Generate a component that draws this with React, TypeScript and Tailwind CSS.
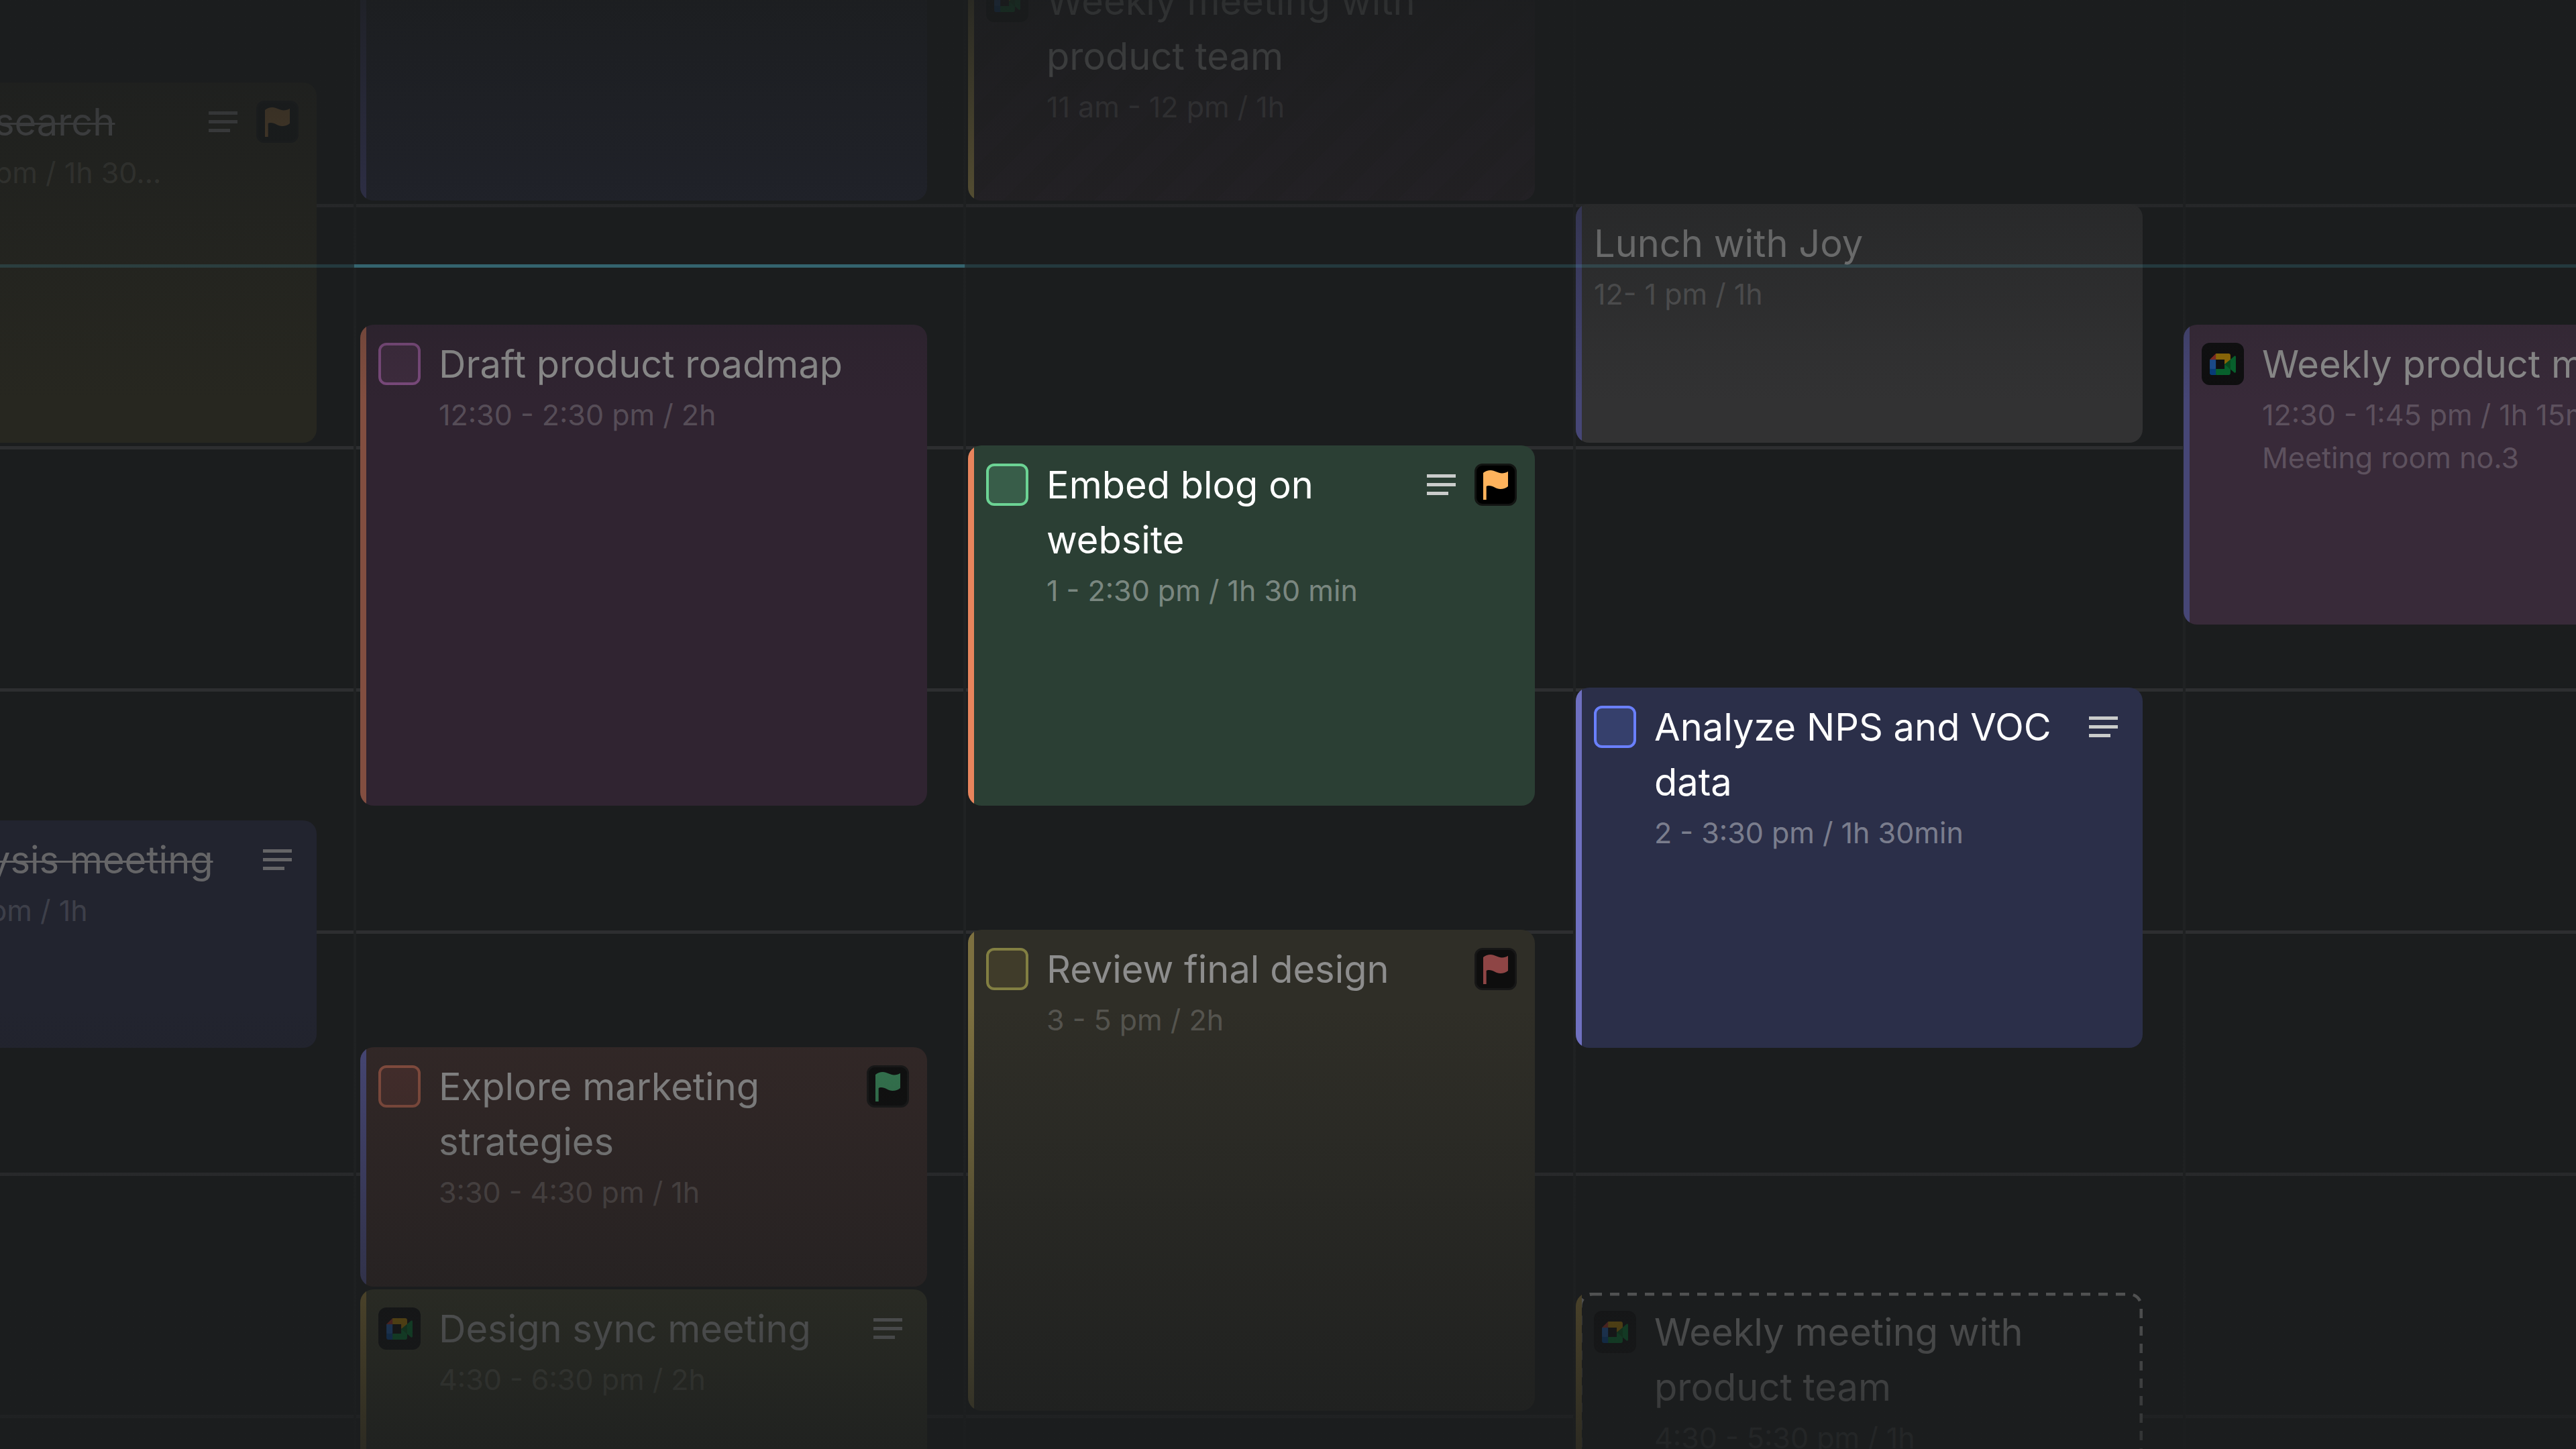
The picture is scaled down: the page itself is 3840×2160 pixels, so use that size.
import React from 'react';
import clsx from 'clsx';

const HOURS = ['11 am', '12 pm', '1 pm', '2 pm', '3 pm', '4 pm', '5 pm'];

function NotesIcon() {
  return (
    <span className="flex h-[63px] w-[63px] shrink-0 items-center justify-center">
      <svg viewBox="0 0 43 31" className="h-[31px] w-[43px]" fill="currentColor" aria-hidden="true">
        <rect width="43" height="5" />
        <rect y="13" width="43" height="5" />
        <rect y="26" width="32" height="5" />
      </svg>
    </span>
  );
}

function FlagIcon({ className, box }: { className: string; box?: string }) {
  return (
    <span className={clsx('h-[63px] w-[63px] shrink-0 rounded-xl border-[3px]', box ?? 'border-[#171717] bg-[#0e0e0e]', className)}>
      <svg viewBox="3 3 57 57" className="h-full w-full" fill="currentColor" aria-hidden="true">
        <path d="M13 14C16 11.500 20 10 24 10C30 10 35 14.500 41 14.500C44 14.500 47.500 13.500 50 11.700V34C47 36.500 43 38 38.700 38C32 38 28 33 21.700 33C20 33 18.700 33.300 17.700 34V54H13Z" />
      </svg>
    </span>
  );
}

function MeetIcon({ faded }: { faded?: boolean }) {
  return (
    <span className={clsx('flex h-[63px] w-[63px] shrink-0 items-center justify-center rounded-xl', faded ? 'bg-[#111213]' : 'bg-[#0e0e0f]')}>
      <svg viewBox="0 0 87.500 72" className="h-[32px] w-[39px] opacity-55" aria-hidden="true">
        <path fill="#00832d" d="M49.500 36l8.530 9.750 11.470 7.330 2-17.020-2-16.640-11.690 6.440z" />
        <path fill="#0066da" d="M0 51.500V66c0 3.315 2.685 6 6 6h14.500l3-10.960-3-9.540-9.950-3z" />
        <path fill="#e94235" d="M20.500 0L0 20.500l10.550 3 9.950-3 2.950-9.410z" />
        <path fill="#2684fc" d="M20.500 20.500H0v31h20.500z" />
        <path fill="#00ac47" d="M82.600 8.680L69.500 19.420v33.660l13.160 10.790c1.970 1.540 4.850.135 4.850-2.370V11c0-2.535-2.945-3.925-4.910-2.320zM49.500 36v15.500h-29V72h43c3.315 0 6-2.685 6-6V53.080z" />
        <path fill="#ffba00" d="M63.500 0h-43v20.500h29V36l20-16.570V6c0-3.315-2.685-6-6-6z" />
      </svg>
    </span>
  );
}

type CardProps = {
  title?: React.ReactNode;
  time?: string;
  place?: string;
  className: string;
  accent?: string;
  check?: string;
  meet?: boolean;
  fadedMeet?: boolean;
  done?: boolean;
  active?: boolean;
  icons?: React.ReactNode;
  iconColor?: string;
  children?: React.ReactNode;
};

function EventCard(props: CardProps) {
  const { title, time, place, className, accent, check, meet, fadedMeet, done, active, icons, iconColor, children } = props;
  const id = React.useId();
  const titleClass = clsx(
    'block text-[56px] leading-[82px]',
    active ? 'text-white' : done ? 'text-[#656567] line-through decoration-[3px]' : 'text-[#8d8d8d]'
  );

  return (
    <article className={clsx('relative flex shrink-0 overflow-hidden', done ? 'rounded-r-[20px]' : 'rounded-[20px]', className)}>
      {accent && <div className={clsx('w-[9px] shrink-0', accent)} />}
      {title && (
        <div className={clsx('flex min-w-0 flex-1 gap-[27px] pr-[27px]', !done && 'pl-[18px]')}>
          {check && (
            <input
              id={id}
              type="checkbox"
              className={clsx('mt-[27px] h-[63px] w-[63px] shrink-0 appearance-none rounded-xl border-[4px]', check)}
            />
          )}
          {meet && (
            <div className="pt-[27px]">
              <MeetIcon faded={fadedMeet} />
            </div>
          )}
          <div className="min-w-0 flex-1 pt-[18px]">
            {check ? (
              <label htmlFor={id} className={titleClass}>{title}</label>
            ) : (
              <h3 className={titleClass}>{title}</h3>
            )}
            <p className={clsx('mt-[2px] whitespace-nowrap text-[43px] leading-[64px]', active ? 'text-white/40' : done ? 'text-white/15' : 'text-white/20')}>
              {time}
            </p>
            {place && <p className="whitespace-nowrap text-[43px] leading-[64px] text-white/20">{place}</p>}
          </div>
          {icons && <div className={clsx('flex gap-[18px] pt-[27px]', iconColor ?? 'text-[#7a7a7a]')}>{icons}</div>}
        </div>
      )}
      {children}
    </article>
  );
}

export default function App() {
  return (
    <main className="relative h-screen overflow-hidden bg-[#1b1d1e] font-['Inter',sans-serif]">
      {/* hour lines */}
      <div className="absolute inset-x-0 -top-[57px]">
        {HOURS.map((hour) => (
          <div key={hour} className="h-[361px] border-t-[5px] border-[#2d2e30]" />
        ))}
      </div>

      {/* day lines */}
      <div className="absolute inset-0 grid grid-cols-[531fr_909fr_909fr_909fr_582fr]">
        <div className="border-r-[4px] border-[#202223]" />
        <div className="border-r-[4px] border-[#202223]" />
        <div className="border-r-[4px] border-[#202223]" />
        <div className="border-r-[4px] border-[#202223]" />
      </div>

      {/* events */}
      <div className="-mt-[57px] grid grid-cols-[476fr_845fr_845fr_845fr_585fr] gap-x-[61px]">
        <div className="flex min-w-0 flex-col pr-1">
          <EventCard
            title="search"
            time="pm / 1h 30..."
            done
            className="-ml-2 mt-[180px] h-[537px] bg-[#272720]"
            iconColor="text-[#5d5d5f]"
            icons={
              <>
                <NotesIcon />
                <FlagIcon className="text-[#6a5030]" box="border-[#191c1c] bg-[#161919]" />
              </>
            }
          />
          <EventCard
            title="ysis meeting"
            time="pm / 1h"
            done
            className="-ml-4 mt-[563px] h-[339px] bg-[#22242f]"
            iconColor="text-[#656567]"
            icons={<NotesIcon />}
          />
        </div>

        <div className="flex min-w-0 flex-col">
          <EventCard className="h-[356px] bg-[#232531]" accent="bg-[#3a3a60]" />
          <EventCard
            title="Draft product roadmap"
            time="12:30 - 2:30 pm / 2h"
            className="mt-[185px] h-[717px] bg-[#302431]"
            accent="bg-[#824e40]"
            check="border-[#7a4a7c] bg-[#3d2b3d]"
          />
          <EventCard
            title="Explore marketing strategies"
            time="3:30 - 4:30 pm / 1h"
            className="mt-[360px] h-[357px] bg-[#332827]"
            accent="bg-[#484878]"
            check="border-[#8a4f40] bg-[#462e2c]"
            icons={<FlagIcon className="text-[#357a52]" />}
          />
          <EventCard
            title="Design sync meeting"
            time="4:30 - 6:30 pm / 2h"
            className="mt-1 h-[717px] bg-[#38392a]"
            accent="bg-[#7d6a35]"
            meet
            iconColor="text-[#8a8a8a]"
            icons={<NotesIcon />}
          />
        </div>

        <div className="flex min-w-0 flex-col">
          <EventCard
            title="Weekly meeting with product team"
            time="11 am - 12 pm / 1h"
            className="h-[356px] bg-[repeating-linear-gradient(135deg,#282329_0px,#282329_32px,#262226_32px,#262226_64px)]"
            accent="bg-[#7d7040]"
            meet
            fadedMeet
          />
          <EventCard
            title="Embed blog on website"
            time="1 - 2:30 pm / 1h 30 min"
            active
            className="mt-[365px] h-[537px] bg-[#2b3f34]"
            accent="bg-[#e8845c]"
            check="border-[#6cd394] bg-[#385d49]"
            iconColor="text-[#cacccb]"
            icons={
              <>
                <NotesIcon />
                <FlagIcon className="text-[#ffb35c]" box="border-[#121412] bg-black" />
              </>
            }
          />
          <EventCard
            title="Review final design"
            time="3 - 5 pm / 2h"
            className="mt-[185px] h-[717px] bg-[#2f2e27]"
            accent="bg-[#7d7040]"
            check="border-[#827f42] bg-[#403c2a]"
            icons={<FlagIcon className="text-[#8e4545]" />}
          />
        </div>

        <div className="flex min-w-0 flex-col">
          <EventCard
            title="Lunch with Joy"
            time="12- 1 pm / 1h"
            className="mt-[361px] h-[356px] bg-[#323233]"
            accent="bg-[#464676]"
          />
          <EventCard
            title="Analyze NPS and VOC data"
            time="2 - 3:30 pm / 1h 30min"
            active
            className="z-10 mt-[365px] h-[537px] bg-[#2b2f49]"
            accent="bg-[#6f70c0]"
            check="border-[#6a80ff] bg-[#36406c]"
            iconColor="text-[#cacccb]"
            icons={<NotesIcon />}
          />
          <EventCard
            title="Weekly meeting with product team"
            time="4:30 - 5:30 pm / 1h"
            className="mt-[365px] h-[356px] bg-[#1b1d1e]"
            accent="bg-[#7d6a35]"
            meet
          >
            <svg className="absolute inset-y-0 left-[9px] right-0 h-full w-[calc(100%-9px)]" fill="none" aria-hidden="true">
              <rect x="-2" y="2" width="100%" height="352" rx="18" stroke="#8d8d8d" strokeWidth="5" strokeDasharray="14 12" />
            </svg>
          </EventCard>
        </div>

        <div className="flex min-w-0 flex-col">
          <EventCard
            title={<span className="whitespace-nowrap">Weekly product meeting</span>}
            time="12:30 - 1:45 pm / 1h 15min"
            place="Meeting room no.3"
            className="mt-[541px] h-[447px] w-[845px] bg-[#382a39]"
            accent="bg-[#464676]"
            meet
          />
        </div>
      </div>

      {/* edge fades */}
      <div className="pointer-events-none absolute inset-x-0 top-0 h-[600px] bg-linear-to-b from-[#1b1d1e]/85 to-[#1b1d1e]/0" />
      <div className="pointer-events-none absolute inset-x-0 bottom-0 h-[660px] bg-linear-to-t from-[#1b1d1e]/82 to-[#1b1d1e]/0" />

      {/* current time */}
      <div className="absolute inset-x-0 top-[394px] grid h-[5px] grid-cols-[528fr_910fr_2402fr]">
        <div className="bg-[#4daabe]/20" />
        <div className="bg-[#4daabe]/50" />
        <div className="bg-[#4daabe]/20" />
      </div>
    </main>
  );
}
